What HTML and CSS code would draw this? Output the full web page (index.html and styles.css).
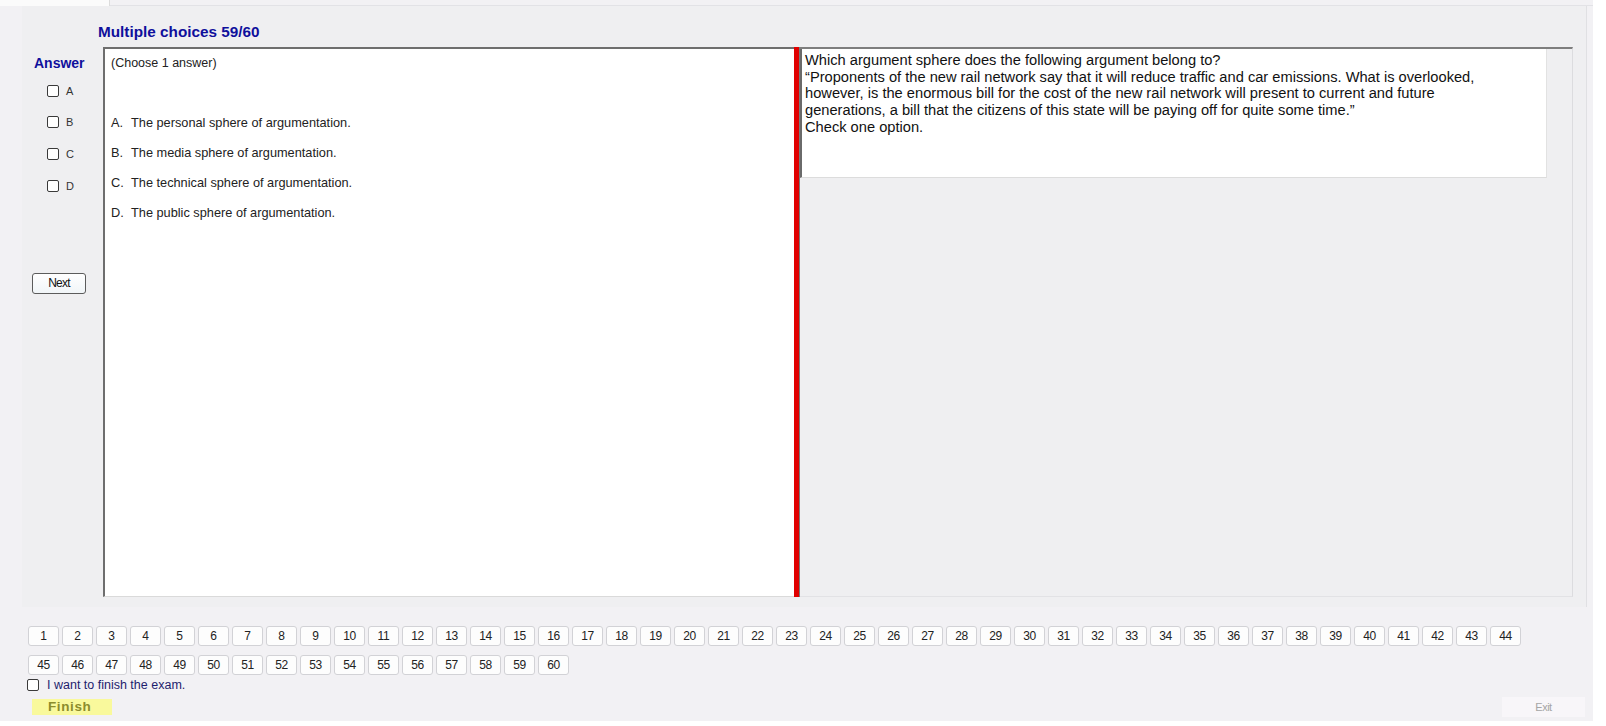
FILE: index.html
```html
<!DOCTYPE html>
<html lang="en">
<head>
<meta charset="utf-8">
<title>Exam</title>
<link rel="stylesheet" href="styles.css">
</head>
<body>
<div class="app">
  <div class="tabs"><div class="tab"></div></div>
  <div class="work">
    <div class="title">Multiple choices 59/60</div>
    <div class="content">
      <div class="answer-col">
        <div class="answer-label">Answer</div>
        <div class="checks">
          <label class="ck"><input type="checkbox" class="box"><span>A</span></label>
          <label class="ck"><input type="checkbox" class="box"><span>B</span></label>
          <label class="ck"><input type="checkbox" class="box"><span>C</span></label>
          <label class="ck"><input type="checkbox" class="box"><span>D</span></label>
        </div>
        <button class="next-btn">Next</button>
      </div>
      <div class="choices-box">
        <div class="choose">(Choose 1 answer)</div>
        <div class="options">
          <div class="option"><span class="letter">A.</span><span>The personal sphere of argumentation.</span></div>
          <div class="option"><span class="letter">B.</span><span>The media sphere of argumentation.</span></div>
          <div class="option"><span class="letter">C.</span><span>The technical sphere of argumentation.</span></div>
          <div class="option"><span class="letter">D.</span><span>The public sphere of argumentation.</span></div>
        </div>
      </div>
      <div class="redbar"></div>
      <div class="question-area">
        <div class="question-box">Which argument sphere does the following argument belong to?<br>“Proponents of the new rail network say that it will reduce traffic and car emissions. What is overlooked,<br>however, is the enormous bill for the cost of the new rail network will present to current and future<br>generations, a bill that the citizens of this state will be paying off for quite some time.”<br>Check one option.</div>
      </div>
    </div>
  </div>
  <div class="bottom">
    <div class="numrow">
      <button class="num">1</button><button class="num">2</button><button class="num">3</button><button class="num">4</button><button class="num">5</button><button class="num">6</button><button class="num">7</button><button class="num">8</button><button class="num">9</button><button class="num">10</button><button class="num">11</button><button class="num">12</button><button class="num">13</button><button class="num">14</button><button class="num">15</button><button class="num">16</button><button class="num">17</button><button class="num">18</button><button class="num">19</button><button class="num">20</button><button class="num">21</button><button class="num">22</button><button class="num">23</button><button class="num">24</button><button class="num">25</button><button class="num">26</button><button class="num">27</button><button class="num">28</button><button class="num">29</button><button class="num">30</button><button class="num">31</button><button class="num">32</button><button class="num">33</button><button class="num">34</button><button class="num">35</button><button class="num">36</button><button class="num">37</button><button class="num">38</button><button class="num">39</button><button class="num">40</button><button class="num">41</button><button class="num">42</button><button class="num">43</button><button class="num">44</button>
    </div>
    <div class="numrow second">
      <button class="num">45</button><button class="num">46</button><button class="num">47</button><button class="num">48</button><button class="num">49</button><button class="num">50</button><button class="num">51</button><button class="num">52</button><button class="num">53</button><button class="num">54</button><button class="num">55</button><button class="num">56</button><button class="num">57</button><button class="num">58</button><button class="num">59</button><button class="num">60</button>
    </div>
    <label class="finish-check"><input type="checkbox" class="box"><span>I want to finish the exam.</span></label>
    <div class="actions">
      <div class="finish">Finish</div>
      <button class="exit">Exit</button>
    </div>
  </div>
</div>
</body>
</html>
```
FILE: styles.css
```css
* { box-sizing: border-box; }
body {
  margin: 0;
  background: #ffffff;
  font-family: "Liberation Sans", Arial, sans-serif;
}
button { font-family: inherit; }
.app {
  width: 1593px;
  height: 721px;
  background: #f2f1f4;
  display: flex;
  flex-direction: column;
}
.tabs {
  height: 6px;
  border-bottom: 1px solid #e2e2e6;
  display: flex;
}
.tab {
  width: 110px;
  height: 6px;
  background: #fbfbfb;
  border-right: 1px solid #dcdcdc;
}
.work {
  margin-left: 22px;
  width: 1565px;
  height: 601px;
  background: #efeff1;
  border-right: 1px solid #e0e0e3;
}
.title {
  font-weight: bold;
  font-size: 15.3px;
  line-height: 17px;
  color: #0f0f9c;
  padding: 17px 0 0 76px;
  height: 41px;
}
.content {
  display: flex;
  height: 551px;
}
.answer-col {
  width: 81px;
  display: flex;
  flex-direction: column;
  align-items: flex-start;
}
.answer-label {
  font-weight: bold;
  font-size: 14px;
  line-height: 16px;
  color: #0f0f9c;
  padding: 8px 0 0 12px;
}
.checks {
  margin-top: 4px;
  display: flex;
  flex-direction: column;
}
.ck {
  height: 31.67px;
  display: flex;
  align-items: center;
  padding-left: 25px;
  font-size: 11px;
  color: #333;
}
.box {
  appearance: none;
  -webkit-appearance: none;
  margin: 0;
  width: 12px;
  height: 12px;
  border: 1px solid #3a3a3a;
  border-radius: 2px;
  background: #fff;
}
.ck span { margin-left: 7px; }
.next-btn {
  margin: 71px 0 0 10px;
  width: 54px;
  height: 21px;
  border: 1px solid #5c5c5c;
  border-radius: 3px;
  background: linear-gradient(#ffffff, #f1f5f8);
  font-size: 12px;
  letter-spacing: -0.8px;
  color: #111;
  padding: 0;
}
.choices-box {
  width: 691px;
  height: 550px;
  background: #ffffff;
  border-top: 2px solid #6e6e6e;
  border-left: 2px solid #6e6e6e;
  border-bottom: 1px solid #dadada;
  padding: 7px 0 0 6px;
  font-size: 12.5px;
  line-height: 15px;
  color: #222;
}
.options {
  margin-top: 44px;
  font-size: 12.75px;
}
.option {
  display: flex;
  height: 30px;
}
.letter { width: 20px; }
.redbar {
  width: 6px;
  height: 550px;
  background: #e00000;
  border-right: 1px solid #7a7a7a;
}
.question-area {
  width: 773px;
  height: 550px;
  border-top: 2px solid #7e7e7e;
  border-right: 1px solid #dcdcdf;
  border-bottom: 1px solid #e2e2e5;
  background: #efeff1;
}
.question-box {
  width: 747px;
  height: 129px;
  background: #ffffff;
  border-left: 2px solid #6a6a6a;
  border-right: 1px solid #e2e2e2;
  border-bottom: 1px solid #dcdcdc;
  padding: 3px 0 0 3px;
  font-size: 14.67px;
  line-height: 16.7px;
  color: #111;
  white-space: nowrap;
}
.bottom {
  padding: 19px 0 0 28px;
  display: flex;
  flex-direction: column;
}
.numrow {
  display: flex;
  gap: 3px;
}
.numrow.second { margin-top: 9px; }
.num {
  width: 31px;
  height: 20px;
  padding: 0;
  background: #fdfdfd;
  border: 1px solid #d2d2d6;
  border-radius: 3px;
  font-size: 12px;
  letter-spacing: -0.3px;
  color: #222;
}
.finish-check {
  display: flex;
  align-items: center;
  height: 14px;
  margin: 3px 0 0 -1px;
  font-size: 12.5px;
  color: #1e1e6e;
}
.finish-check span { margin-left: 8px; }
.actions {
  margin-top: 5px;
  display: flex;
  justify-content: space-between;
  align-items: center;
  width: 1557px;
}
.finish {
  margin-left: 4px;
  width: 80px;
  height: 16px;
  background: #f9f99c;
  color: #8c8c2c;
  font-weight: bold;
  font-size: 13.5px;
  letter-spacing: 0.6px;
  line-height: 16px;
  padding-left: 16px;
}
.exit {
  width: 83px;
  height: 20px;
  padding: 0;
  border: none;
  background: #f8f6f9;
  color: #a5a5a5;
  font-size: 11px;
  letter-spacing: -0.5px;
}
```
